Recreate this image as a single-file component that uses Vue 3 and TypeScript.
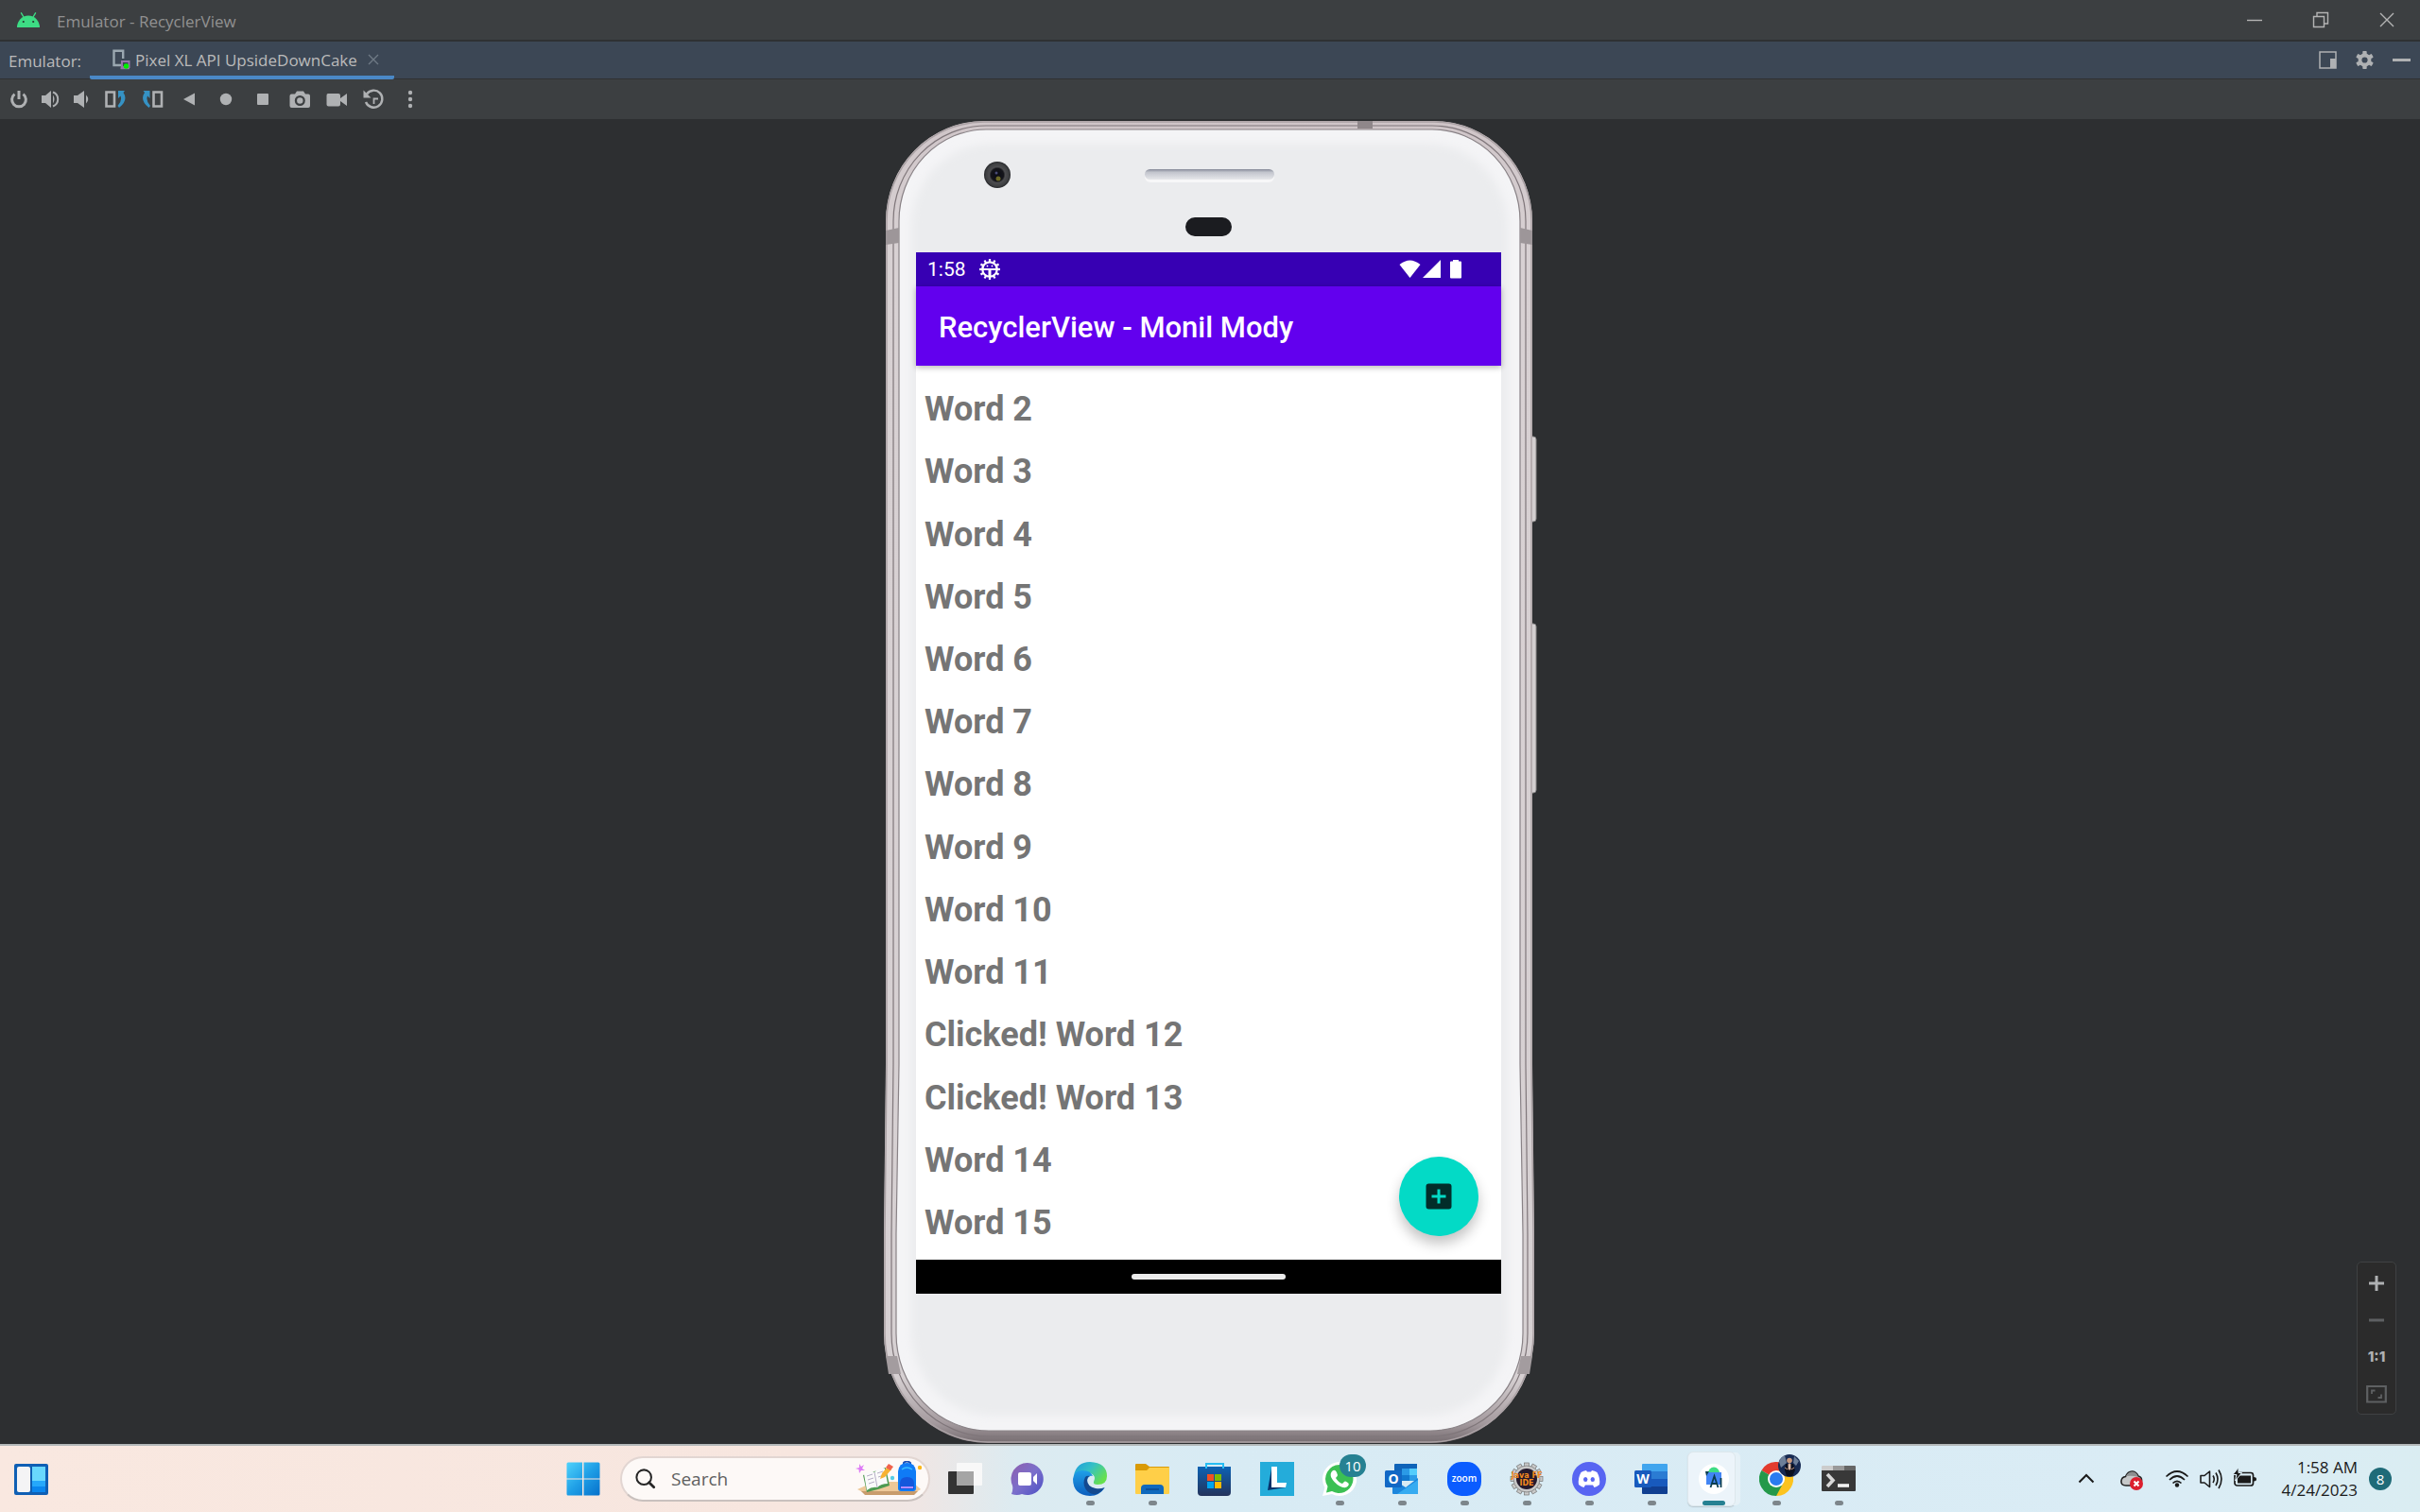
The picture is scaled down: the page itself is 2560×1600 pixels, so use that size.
<script setup lang="ts">
import { ref } from 'vue'

interface WordRow {
  id: number
  clicked: boolean
}

const rows = ref<WordRow[]>(
  Array.from({ length: 14 }, (_, i) => ({ id: i + 2, clicked: i + 2 === 12 || i + 2 === 13 })),
)

const teeth = Array.from({ length: 12 }, (_, i) => i * 30)
</script>

<template>
  <div class="desktop">
    <header class="titlebar">
      <svg class="droid" viewBox="0 0 24 16" aria-hidden="true">
        <path d="M4.500 0.800 L7 5 M19.500 0.800 L17 5" stroke="#3ddc84" stroke-width="1.400" stroke-linecap="round" />
        <path d="M0 16 A12 12.500 0 0 1 24 16 Z" fill="#3ddc84" />
        <circle cx="6.800" cy="10" r="1.100" fill="#26352c" />
        <circle cx="17.200" cy="10" r="1.100" fill="#26352c" />
      </svg>
      <span class="window-name">Emulator - RecyclerView</span>
      <div class="window-controls">
        <button type="button" aria-label="Minimize">
          <svg viewBox="0 0 18 18"><path d="M1 9.500H17" /></svg>
        </button>
        <button type="button" aria-label="Restore">
          <svg viewBox="0 0 18 18"><path d="M1.500 5.500H12.500V16.500H1.500Z M5 5V1.500H16.500V13H13" /></svg>
        </button>
        <button type="button" aria-label="Close">
          <svg viewBox="0 0 18 18"><path d="M2 2L16 16M16 2L2 16" /></svg>
        </button>
      </div>
    </header>

    <nav class="tabbar">
      <span class="tool-name">Emulator:</span>
      <div class="tab">
        <svg class="tab-icon" viewBox="0 0 19 22" aria-hidden="true">
          <path d="M1.500 2.500 V17 H9 M1.500 3 V1.800 H11.200 V10" fill="none" stroke="#9aa7b0" stroke-width="2.400" />
          <path d="M10 13 H17.500 V19 H10 Z M8.500 20.300 H18" fill="none" stroke="#9876aa" stroke-width="2" />
          <circle cx="14.500" cy="18" r="2.800" fill="#00f000" />
        </svg>
        <span>Pixel XL API UpsideDownCake</span>
        <button type="button" class="tab-close" aria-label="Close tab">
          <svg viewBox="0 0 12 12"><path d="M1 1L11 11M11 1L1 11" stroke="#6f7a85" stroke-width="1.400" /></svg>
        </button>
      </div>
      <div class="tab-actions">
        <button type="button" aria-label="View mode">
          <svg viewBox="0 0 19 19"><path d="M1 1H18V18H1Z" fill="none" stroke="#afb1b3" stroke-width="1.500" /><path d="M12 8H18V18H12Z" fill="#afb1b3" /></svg>
        </button>
        <button type="button" aria-label="Options">
          <svg viewBox="0 0 19 19">
            <g fill="#afb1b3">
              <rect v-for="a in [0, 60, 120, 180, 240, 300]" :key="a" x="7.300" y="0" width="4.400" height="5" rx="0.800" :transform="`rotate(${a} 9.500 9.500)`" />
            </g>
            <circle cx="9.500" cy="9.500" r="5" fill="none" stroke="#afb1b3" stroke-width="3.800" />
          </svg>
        </button>
        <button type="button" aria-label="Hide">
          <svg viewBox="0 0 19 19"><path d="M0 9.500H19" stroke="#afb1b3" stroke-width="3" /></svg>
        </button>
      </div>
    </nav>

    <div class="toolbar">
      <div class="tools narrow">
        <button type="button" aria-label="Power">
          <svg viewBox="0 0 25 25"><path d="M7.500 7.600 A7.400 7.400 0 1 0 16.500 7.600" fill="none" stroke="#afb1b3" stroke-width="3" /><path d="M12 4V13" stroke="#afb1b3" stroke-width="3" /></svg>
        </button>
        <button type="button" aria-label="Volume up">
          <svg viewBox="0 0 25 25"><path d="M3 9H7L13 4V22L7 17H3Z" fill="#afb1b3" /><path d="M15 8.500Q18 13 15 17.500Z" fill="#afb1b3" /><path d="M15 5.500A8 8 0 0 1 15 20.500" fill="none" stroke="#afb1b3" stroke-width="2" /></svg>
        </button>
        <button type="button" aria-label="Volume down">
          <svg viewBox="0 0 25 25"><path d="M4 9H8L15 4V22L8 17H4Z" fill="#afb1b3" /><path d="M17 8.500Q21.500 13 17 17.500Z" fill="#afb1b3" /></svg>
        </button>
      </div>
      <div class="tools">
        <button type="button" aria-label="Rotate left">
          <svg viewBox="0 0 25 25"><path d="M2.500 5.500H11V20.500H2.500Z" fill="none" stroke="#afb1b3" stroke-width="2.600" /><path d="M15 4H22L20.500 6Q26 14 16 22L14.500 20Q19.500 15 17.500 9.500L15 12Z" fill="#3592c4" /></svg>
        </button>
        <button type="button" aria-label="Rotate right">
          <svg viewBox="0 0 25 25"><path d="M13.500 5.500H22V20.500H13.500Z" fill="none" stroke="#afb1b3" stroke-width="2.600" /><path d="M9.500 4H2.500L4 6Q-1.500 14 8.500 22L10 20Q5 15 7 9.500L9.500 12Z" fill="#3592c4" /></svg>
        </button>
        <button type="button" aria-label="Back">
          <svg viewBox="0 0 25 25"><path d="M6 13L18 6.500V19.500Z" fill="#afb1b3" /></svg>
        </button>
        <button type="button" aria-label="Home">
          <svg viewBox="0 0 25 25"><circle cx="12" cy="13" r="6.200" fill="#afb1b3" /></svg>
        </button>
        <button type="button" aria-label="Overview">
          <svg viewBox="0 0 25 25"><rect x="6" y="7" width="12" height="12" rx="1" fill="#afb1b3" /></svg>
        </button>
        <button type="button" aria-label="Take screenshot">
          <svg viewBox="0 0 25 25"><path fill-rule="evenodd" d="M9 4.500H16L18 7.500H21Q23 7.500 23 9.500V20Q23 22 21 22H3.500Q1.500 22 1.500 20V9.500Q1.500 7.500 3.500 7.500H7Z M12.300 9A5.500 5.500 0 1 0 12.300 20A5.500 5.500 0 1 0 12.300 9Z" fill="#afb1b3" /><circle cx="12.300" cy="14.500" r="3.200" fill="#afb1b3" /></svg>
        </button>
        <button type="button" aria-label="Record screen">
          <svg viewBox="0 0 25 25"><path d="M3 7H14Q16 7 16 9V12L23 7V20L16 15V18.500Q16 20.500 14 20.500H3.500Q1.500 20.500 1.500 18.500V9Q1.500 7 3 7Z" fill="#afb1b3" /></svg>
        </button>
        <button type="button" aria-label="Snapshots">
          <svg viewBox="0 0 25 25"><path d="M5 7.500A9 9 0 1 1 4 16" fill="none" stroke="#afb1b3" stroke-width="2.400" /><path d="M1.500 3.500V11.500H9.500Z" fill="#afb1b3" /><path d="M12.500 18V12.500H17" fill="none" stroke="#afb1b3" stroke-width="1.800" /></svg>
        </button>
        <button type="button" aria-label="More">
          <svg viewBox="0 0 25 25"><g fill="#afb1b3"><circle cx="12" cy="6" r="2.200" /><circle cx="12" cy="13" r="2.200" /><circle cx="12" cy="20" r="2.200" /></g></svg>
        </button>
      </div>
    </div>

    <main class="stage">
      <div class="phone">
        <svg class="shell" viewBox="0 0 692 1402" aria-hidden="true">
          <defs>
            <linearGradient id="rim" x1="0" y1="0" x2="0" y2="1">
              <stop offset="0" stop-color="#cfc5c8" />
              <stop offset="0.100" stop-color="#d8d1d3" />
              <stop offset="0.950" stop-color="#d6d0d2" />
              <stop offset="0.985" stop-color="#a49a9e" />
              <stop offset="1" stop-color="#756c70" />
            </linearGradient>
            <linearGradient id="slot" x1="0" y1="0" x2="0" y2="1">
              <stop offset="0" stop-color="#868a98" />
              <stop offset="0.300" stop-color="#c2c5cd" />
              <stop offset="1" stop-color="#e6e7ea" />
            </linearGradient>
            <radialGradient id="lens">
              <stop offset="0" stop-color="#0b0c16" />
              <stop offset="0.480" stop-color="#15151a" />
              <stop offset="0.600" stop-color="#4d4d50" />
              <stop offset="0.850" stop-color="#3f4042" />
              <stop offset="1" stop-color="#26272a" />
            </radialGradient>
            <filter id="soften" x="-5%" y="-5%" width="110%" height="110%">
              <feGaussianBlur stdDeviation="5" />
            </filter>
          </defs>
          <g fill="#d3cfd0" stroke="#8c8a8b" stroke-width="1">
            <rect x="682" y="336" width="9" height="90" rx="3" />
            <rect x="682" y="534" width="9" height="179" rx="3" />
          </g>
          <path d="M107 2H583A104 106 0 0 1 687 108V1000L689 1180V1285A110 116 0 0 1 579 1401H111A110 116 0 0 1 1 1285V1180L3 1000V108A104 106 0 0 1 107 2Z" fill="url(#rim)" />
          <path d="M107 3H583A103 105 0 0 1 686 108V1000L688 1180V1285A109 115 0 0 1 579 1400H111A109 115 0 0 1 2 1285V1180L4 1000V108A103 105 0 0 1 107 3Z" fill="none" stroke="#aaa1a4" stroke-width="1.500" />
          <path d="M109 7H581A99 101 0 0 1 680 108V1000L682 1180V1285A103 109 0 0 1 579 1394H113A103 109 0 0 1 9 1285V1180L11 1000V108A98 101 0 0 1 109 7Z" fill="none" stroke="#7f767a" stroke-width="1.200" />
          <path d="M109 11H581A93 97 0 0 1 674 108V1000L677 1180V1285A98 103 0 0 1 579 1388H112A98 103 0 0 1 14 1285V1180L17 1000V108A92 97 0 0 1 109 11Z" fill="#f4f4f6" stroke="#898286" stroke-width="1.200" />
          <path d="M113 26H577A86 88 0 0 1 661 112V1280A86 90 0 0 1 577 1372H115A86 90 0 0 1 30 1282V112A86 88 0 0 1 113 26Z" fill="#ebecee" filter="url(#soften)" />
          <rect x="502" y="2" width="16" height="8" fill="#8f878a" />
          <path d="M3 118L17 115V131L3 133Z" fill="#9d9699" />
          <path d="M687 118L674 115V131L687 133Z" fill="#9d9699" />
          <path d="M3 1309H15L19 1328H6Z" fill="#a39c9f" />
          <path d="M687 1309H675L671 1328H684Z" fill="#a39c9f" />
          <circle cx="121" cy="59" r="14" fill="url(#lens)" />
          <circle cx="122" cy="63" r="2.500" fill="#6d6a26" />
          <circle cx="120" cy="57" r="1.500" fill="#4a4c78" />
          <rect x="277" y="54" width="137" height="13" rx="6" fill="#f7f7f8" />
          <rect x="277" y="53" width="137" height="11" rx="5.500" fill="url(#slot)" />
          <rect x="320" y="104" width="49" height="20" rx="10" fill="#1b1c20" />
        </svg>

        <div class="screen">
          <div class="statusbar">
            <span>1:58</span>
            <svg class="debug" viewBox="0 0 22 22" aria-hidden="true">
              <g fill="#fff">
                <rect v-for="a in teeth" :key="a" x="9.900" y="0" width="2.200" height="4" :transform="`rotate(${a} 11 11)`" />
              </g>
              <circle cx="11" cy="11" r="7.700" fill="none" stroke="#fff" stroke-width="2.200" />
              <path d="M4 11H18" stroke="#fff" stroke-width="2" />
              <path d="M11 11V19" stroke="#fff" stroke-width="3" />
              <circle cx="8.500" cy="7.500" r="0.900" fill="#fff" />
              <circle cx="13.500" cy="7.500" r="0.900" fill="#fff" />
            </svg>
            <svg class="signals" viewBox="0 0 68 20" aria-hidden="true">
              <path d="M0.500 5Q11.500 -4 22.500 5L11.500 19Z" fill="#fff" />
              <path d="M44 0V19H25Z" fill="#fff" />
              <path d="M57 1.500V0H63V1.500H65Q66 1.500 66 2.500V18.500Q66 19.500 65 19.500H55Q54 19.500 54 18.500V2.500Q54 1.500 55 1.500Z" fill="#fff" />
            </svg>
          </div>
          <h1 class="appbar">RecyclerView - Monil Mody</h1>
          <ul class="words">
            <li v-for="row in rows" :key="row.id">{{ row.clicked ? 'Clicked! ' : '' }}Word {{ row.id }}</li>
          </ul>
          <button type="button" class="fab" aria-label="Add word">
            <svg viewBox="0 0 28 28"><rect x="0.500" y="0.500" width="27" height="27" rx="3" fill="#022d2a" /><path d="M14 6.500V21.500M6.500 14H21.500" stroke="#03dac6" stroke-width="3" /></svg>
          </button>
          <div class="navbar"><span class="handle"></span></div>
        </div>
      </div>

      <div class="zoom-panel">
        <button type="button" aria-label="Zoom in"><svg viewBox="0 0 22 20"><path d="M11 2V18M3 10H19" stroke="#afb1b3" stroke-width="3" /></svg></button>
        <button type="button" aria-label="Zoom out"><svg viewBox="0 0 22 20"><path d="M3 10H19" stroke="#5e6062" stroke-width="3" /></svg></button>
        <button type="button" class="ratio">1:1</button>
        <button type="button" aria-label="Fit to screen"><svg viewBox="0 0 22 20"><path d="M1.200 2H20.800V18.500H1.200Z" fill="none" stroke="#5e6062" stroke-width="2.200" /><path d="M6 10V6.500H9.500M16 10.500V14H12.500" fill="none" stroke="#5e6062" stroke-width="1.800" /></svg></button>
      </div>
    </main>

    <footer class="taskbar">
      <button type="button" class="widgets" aria-label="Widgets">
        <svg viewBox="0 0 36 33">
          <rect width="36" height="33" rx="2" fill="#0f5fb4" />
          <rect x="3" y="3" width="14" height="27" rx="2" fill="#f4f4f5" />
          <path d="M19 3H33V18H19Z" fill="#69d8fd" />
          <path d="M19 18H33V24H19Z" fill="#25a8fb" />
          <path d="M19 24H33V30H19Z" fill="#0a86ee" />
        </svg>
      </button>

      <div class="center">
        <button type="button" class="app" aria-label="Start">
          <svg class="glyph" viewBox="0 0 36 36">
            <defs><linearGradient id="win" x1="0" y1="0" x2="1" y2="1"><stop offset="0" stop-color="#4fd2fb" /><stop offset="0.500" stop-color="#1f9fe6" /><stop offset="1" stop-color="#0670cb" /></linearGradient></defs>
            <path d="M0.500 2Q0.500 0.500 2 0.500H17V17.500H0.500ZM18.500 0.500H34Q35.500 0.500 35.500 2V17.500H18.500ZM0.500 18.500H17V35.500H2Q0.500 35.500 0.500 34ZM18.500 18.500H35.500V34Q35.500 35.500 34 35.500H18.500Z" fill="url(#win)" />
          </svg>
        </button>

        <label class="search">
          <svg class="lens" viewBox="0 0 24 24" aria-hidden="true"><circle cx="10" cy="10" r="8.500" fill="none" stroke="#262626" stroke-width="2.200" /><path d="M16 16L21.500 21.500" stroke="#262626" stroke-width="3" stroke-linecap="round" /></svg>
          <input type="search" placeholder="Search" aria-label="Search" />
          <svg class="school" viewBox="0 0 72 38" aria-hidden="true">
            <path d="M2 30L20 22H60L69 30L62 34H10Z" fill="#eec898" />
            <path d="M6 32L10 36H62L66 32Z" fill="#c89c6c" />
            <path d="M4 3L6 6L9 4L7 8L10 10L6 10L4 13L3.500 9L0 8L4 7Z" fill="#de7cf5" />
            <path d="M8 15L20 11L32 7L36 26L24 30L12 33Z" fill="#4d9a50" />
            <path d="M9 14Q16 9 20 12Q25 6 31 8L34 24Q27 24 23 28Q17 27 12 31Z" fill="#fafafa" />
            <path d="M20 12L23 28M12 16L18 14M13 20L19 18M14 24L20 22M23 13L29 11M24 17L30 15" stroke="#b6aec6" stroke-width="1" />
            <path d="M26 19L28 13L34 6L38 9L31 17Z" fill="#f7b232" />
            <path d="M32 7L35 3L40 6L37 10Z" fill="#f1624b" />
            <circle cx="39" cy="18" r="2.200" fill="#55cde6" />
            <circle cx="68" cy="7" r="2.200" fill="#fbb718" />
            <path d="M51 5V2Q54 -1 58 2V5" fill="none" stroke="#1c4fb3" stroke-width="2" />
            <path d="M45 11Q46 2 54.500 2Q63 2 64 11V29Q64 32 61 32H48Q45 32 45 29Z" fill="#0f7bf6" />
            <path d="M49 9Q54 5 60 9" fill="none" stroke="#37c0ff" stroke-width="1.500" />
            <path d="M47 30V24Q47 17 54.500 17Q62 17 62 24V30Z" fill="#1457dc" />
            <path d="M48 28H61" stroke="#b28cff" stroke-width="2" />
          </svg>
        </label>

        <div class="apps">
          <button type="button" class="app" aria-label="Task view">
            <svg class="glyph" viewBox="0 0 36 36"><rect x="0" y="10" width="27" height="24" rx="1" fill="#333" /><rect x="9" y="1" width="27" height="24" rx="1" fill="#f8f8f8" /><path d="M9 10H27V25H9Z" fill="#a5a5a5" /></svg>
          </button>
          <button type="button" class="app" aria-label="Chat">
            <svg class="glyph" viewBox="0 0 36 36">
              <defs><linearGradient id="chat" x1="0" y1="0" x2="1" y2="1"><stop offset="0" stop-color="#8f5fae" /><stop offset="0.500" stop-color="#7b6fcb" /><stop offset="1" stop-color="#4c4fc4" /></linearGradient></defs>
              <path d="M18 1A17 17 0 1 1 12 34Q7 36 1 34Q3 29 2 25A17 17 0 0 1 18 1Z" fill="url(#chat)" />
              <rect x="8" y="11" width="14" height="14" rx="2" fill="#fff" /><path d="M24 16L28 12V24L24 20Z" fill="#fff" />
            </svg>
          </button>
          <button type="button" class="app running" aria-label="Edge">
            <svg class="glyph" viewBox="0 0 36 36">
              <defs>
                <linearGradient id="edgeTop" x1="0" y1="0" x2="1" y2="0.600"><stop offset="0" stop-color="#1d9be0" /><stop offset="0.500" stop-color="#35c1c4" /><stop offset="1" stop-color="#66e04d" /></linearGradient>
                <linearGradient id="edgeLow" x1="0" y1="0" x2="0" y2="1"><stop offset="0" stop-color="#1fa0e8" /><stop offset="1" stop-color="#0c5dbd" /></linearGradient>
              </defs>
              <path d="M1 14Q4 0 18 0Q36 1 36 15Q36 24 26 24Q21 24 22 21Q25 15 19 12Q10 8 1 14Z" fill="url(#edgeTop)" />
              <path d="M0 18Q1 9 10 9Q19 9 21 15Q16 14 15 20Q15 30 27 30Q31 30 34 27Q28 36 18 36Q0 35 0 18Z" fill="url(#edgeLow)" />
              <path d="M13 16Q10 22 13 28Q17 35 25 34Q30 32 33.500 27Q29 29 24 28Q15 26 15 19Q15 16 18 15Q15 14 13 16Z" fill="#14498f" />
            </svg>
          </button>
          <button type="button" class="app running" aria-label="File Explorer">
            <svg class="glyph" viewBox="0 0 36 36"><path d="M0 3Q0 2 1 2H11L15 5H35Q36 5 36 6V12H0Z" fill="#d99a06" /><path d="M0 9H12L15 6H36V33Q36 34 35 34H1Q0 34 0 33Z" fill="#ffcf48" /><path d="M6 34V28Q6 24 10 24H26Q30 24 30 28V34Z" fill="#1069bd" /><path d="M11 29H25" stroke="#0a4a90" stroke-width="1.500" /></svg>
          </button>
          <button type="button" class="app" aria-label="Microsoft Store">
            <svg class="glyph" viewBox="0 0 36 36">
              <defs><linearGradient id="bag" x1="0" y1="0" x2="0" y2="1"><stop offset="0" stop-color="#0c62b4" /><stop offset="1" stop-color="#24345c" /></linearGradient></defs>
              <path d="M0 5H35V32Q35 36 31 36H4Q0 36 0 32Z" fill="url(#bag)" /><path d="M9 7V2H27V7" fill="none" stroke="#27bdf3" stroke-width="2" />
              <path d="M10 13H17V20H10Z" fill="#f25022" /><path d="M18 13H25V20H18Z" fill="#7fba00" /><path d="M10 21H17V28H10Z" fill="#00a4ef" /><path d="M18 21H25V28H18Z" fill="#ffb900" />
            </svg>
          </button>
          <button type="button" class="app" aria-label="Lenovo">
            <svg class="glyph" viewBox="0 0 36 36"><path d="M0 0H36V36H0Z" fill="#24acda" /><path d="M12 7L8 30L27 27L13 25Z" fill="#06306a" /><path d="M12 5H18V22H28L27 27H12Z" fill="#fff" /></svg>
          </button>
          <button type="button" class="app running" aria-label="WhatsApp">
            <svg class="glyph" viewBox="0 0 36 36"><path d="M18 0A18 18 0 1 1 10 34L0 36L2.500 27A18 18 0 0 1 18 0Z" fill="#fff" /><path d="M18 3A15 15 0 1 1 10 31L4 32.500L5.500 26A15 15 0 0 1 18 3Z" fill="#3bc054" /><path d="M10 10Q13 7 15 11L16 14Q16 15 14 17Q17 22 21 23L23 21Q24 20 26 21.500Q29 23 27 25.500Q24 29 18 25.500Q12 22 9 16Q8 12 10 10Z" fill="#fff" /></svg>
            <span class="count">10</span>
          </button>
          <button type="button" class="app running" aria-label="Outlook">
            <svg class="glyph" viewBox="0 0 36 36"><path d="M10 3Q10 2 11 2H34V18H10Z" fill="#0f63b8" /><path d="M18 7H26V14H18Z" fill="#2b9ae6" /><path d="M26 7H34V14H26Z" fill="#54cdfc" /><path d="M18 14H26V20H18Z" fill="#1279cf" /><path d="M26 14H34V20H26Z" fill="#2c9de8" /><path d="M8 18L22 27L35 17V33Q35 34 34 34H9Q8 34 8 33Z" fill="#1c86dc" /><path d="M35 19L13 34H34Q35 34 35 33Z" fill="#36abf1" /><rect y="9" width="18" height="18" rx="1.500" fill="#1268c5" /><text x="9" y="23" text-anchor="middle" class="letter">O</text></svg>
          </button>
          <button type="button" class="app running" aria-label="Zoom">
            <svg class="glyph" viewBox="0 0 36 36"><rect width="36" height="36" rx="15" fill="#0b5cff" /><text x="18" y="21" text-anchor="middle" class="zoom-word">zoom</text></svg>
          </button>
          <button type="button" class="app running" aria-label="Java FF IDE">
            <svg class="glyph" viewBox="0 0 36 36"><g fill="#c9c9c9" stroke="#666" stroke-width="0.600"><rect v-for="a in teeth" :key="a" x="15.500" y="1" width="5" height="6" :transform="`rotate(${a} 18 18)`" /><circle cx="18" cy="18" r="14" /></g><circle cx="18" cy="18" r="11" fill="#251a2c" /><text x="18" y="17" text-anchor="middle" class="java">Java FF</text><text x="18" y="25" text-anchor="middle" class="java">IDE</text></svg>
          </button>
          <button type="button" class="app running" aria-label="Discord">
            <svg class="glyph" viewBox="0 0 36 36"><circle cx="18" cy="18" r="18" fill="#5865f2" /><path d="M9.500 11Q12 9.500 15 9L16 10.500H20L21 9Q24 9.500 26.500 11Q30 17 29 24Q26 26.500 23.500 27L22 24.500H14L12.500 27Q10 26.500 7 24Q6 17 9.500 11Z" fill="#fff" /><ellipse cx="14.200" cy="18.500" rx="2.200" ry="2.500" fill="#5865f2" /><ellipse cx="21.800" cy="18.500" rx="2.200" ry="2.500" fill="#5865f2" /></svg>
          </button>
          <button type="button" class="app running" aria-label="Word">
            <svg class="glyph" viewBox="0 0 36 36"><path d="M8 3Q8 2 9 2H34Q35 2 35 3V10H8Z" fill="#41a5ee" /><path d="M8 10H35V18H8Z" fill="#2b7cd3" /><path d="M8 18H35V26H8Z" fill="#185abd" /><path d="M8 26H35V33Q35 34 34 34H9Q8 34 8 33Z" fill="#103f91" /><rect y="9" width="18" height="18" rx="1.500" fill="#185abd" /><text x="9" y="23" text-anchor="middle" class="letter">W</text></svg>
          </button>
          <button type="button" class="app active" aria-label="Android Studio">
            <svg class="glyph" viewBox="0 0 36 36"><circle cx="18" cy="18" r="16" fill="#fff" /><path d="M12 12A6 6.500 0 0 1 24 12Z" fill="#3ddc84" /><path d="M10 11H26V24H10Z" fill="#4285f4" /><path d="M9 10L13 10L10 15Z" fill="#0b3d4f" /><path d="M14.500 27L18.500 15L22.500 27M16 23H21M25.500 17V27" fill="none" stroke="#0b3d4f" stroke-width="1.800" /></svg>
          </button>
          <button type="button" class="app running" aria-label="Chrome">
            <svg class="glyph" viewBox="0 0 36 36"><path d="M18 18L2.400 9A18 18 0 0 1 33.600 9Z" fill="#e33b2e" /><path d="M18 18L33.600 9A18 18 0 0 1 18 36Z" fill="#fcc31e" /><path d="M18 18V24L18 36A18 18 0 0 1 2.400 9Z" fill="#24994a" /><path d="M18 9.500H33.800L25.500 22Z" fill="#fcc31e" /><path d="M25.500 22L18 36L15 26Z" fill="#24994a" /><circle cx="18" cy="18" r="9" fill="#fff" /><circle cx="18" cy="18" r="7" fill="#2a7cf0" /></svg>
            <svg class="avatar" viewBox="0 0 24 24"><circle cx="12" cy="12" r="12" fill="#172a52" /><path d="M1 8A12 12 0 0 1 7 1L9 9L3 14ZM17 2L22 7L19 12L16 9Z" fill="#6d7f99" /><circle cx="12" cy="6.500" r="2.800" fill="#c89a80" /><path d="M8 10L16 10L18 17L15 23H9L7 17Z" fill="#0b1020" /><path d="M11 10H13V16H11ZM7 14L10 16M17 14L14 16" fill="#e8e8ee" stroke="#c89a80" stroke-width="1" /></svg>
          </button>
          <button type="button" class="app running" aria-label="Terminal">
            <svg class="glyph" viewBox="0 0 36 36"><path d="M0 9H36V30Q36 31 35 31H1Q0 31 0 30Z" fill="#383838" /><path d="M0 9V5Q0 4 1 4H12V9Z" fill="#ccc" /><path d="M12 4H24V9H12Z" fill="#999" /><path d="M24 4H35Q36 4 36 5V9H24Z" fill="#666" /><path d="M6 13L12 19.500L6 26" fill="none" stroke="#d8d8d8" stroke-width="3.600" /><path d="M17 25H29" stroke="#f2f2f2" stroke-width="3.600" /></svg>
          </button>
        </div>
      </div>

      <div class="tray">
        <button type="button" aria-label="Show hidden icons"><svg viewBox="0 0 24 24"><path d="M4.500 15.500L12 8L19.500 15.500" fill="none" stroke="#1a1a1a" stroke-width="2" /></svg></button>
        <button type="button" class="cloud" aria-label="OneDrive"><svg viewBox="0 0 24 24"><path d="M6 19Q0.500 19 1 14Q1.500 10 5.500 9.500Q8 3.500 13 4Q17 4.500 19 9Q23 10 22.500 14Q22 18 18 19Z" fill="#c6c8c9" stroke="#222" stroke-width="1.600" /><path d="M6 9Q13 8 19 10Q17 4.500 13 4.500Q8 4.500 6 9Z" fill="#8d8f90" /><circle cx="17" cy="17" r="7" fill="#dc1f2e" /><path d="M14.500 14.500L19.500 19.500M19.500 14.500L14.500 19.500" stroke="#fff" stroke-width="2" /></svg></button>
        <button type="button" class="quick" aria-label="Network, volume and battery">
          <svg viewBox="0 0 24 24"><g fill="none" stroke="#1a1a1a" stroke-width="1.700"><path d="M0.500 9.500Q12 -1.500 23.500 9.500M4 13Q12 5 20 13M7.500 16.500Q12 12 16.500 16.500" /></g><circle cx="12" cy="18.500" r="2.200" fill="#1a1a1a" /></svg>
          <svg viewBox="0 0 24 24"><g fill="none" stroke="#1a1a1a" stroke-width="1.600"><path d="M1 8.500H5L10.500 4V20.500L5 16H1Z" stroke-linejoin="round" /><path d="M14 8.500Q16.500 12.200 14 16M17 5.500Q21 12.200 17 19M20 2.500Q26 12.200 20 22" /></g></svg>
          <svg viewBox="0 0 24 24"><rect x="1" y="5.500" width="19.500" height="13.500" rx="2.500" fill="none" stroke="#1a1a1a" stroke-width="1.700" /><path d="M4 8.500H18V16.500H4Z" fill="#1a1a1a" /><path d="M21 10Q24 10 24 12.300Q24 14.500 21 14.500Z" fill="#1a1a1a" /><path d="M5 0L-1 7.500H3L1.500 14L8.500 5.500H5Z" fill="#1a1a1a" stroke="#d9ebf4" stroke-width="1" /></svg>
        </button>
        <button type="button" class="clock"><time>1:58 AM</time><time>4/24/2023</time></button>
        <span class="alerts">8</span>
      </div>
    </footer>
  </div>
</template>

<style>
body {
  margin: 0;
  background: #2d2f31;
}
</style>

<style scoped>
.desktop {
  min-height: 100vh;
  display: flex;
  flex-direction: column;
  background: #2d2f31;
  font-family: "Open Sans", "Noto Sans", sans-serif;
  font-size: 17px;
  color: #bbbbbb;
}

button {
  padding: 0;
  border: 0;
  background: none;
  color: inherit;
  font: inherit;
  display: flex;
  align-items: center;
  justify-content: center;
}

svg {
  display: block;
  flex: none;
}

.titlebar {
  box-sizing: border-box;
  height: 44px;
  border-bottom: 2px solid #2f3133;
  background: #3c3f41;
  display: flex;
  align-items: center;
  padding-left: 18px;
  color: #919191;
}

.droid {
  width: 24px;
  height: 16px;
}

.window-name {
  margin-left: 18px;
  padding-top: 2px;
}

.window-controls {
  margin-left: auto;
  display: flex;
}

.window-controls button {
  width: 70px;
  height: 42px;
}

.window-controls svg {
  width: 18px;
  height: 18px;
  fill: none;
  stroke: #b4b4b4;
  stroke-width: 1.4px;
}

.tabbar {
  box-sizing: border-box;
  height: 40px;
  border-bottom: 1px solid #2f3133;
  background: #3c4755;
  display: flex;
  padding-left: 9px;
}

.tool-name {
  width: 86px;
  line-height: 42px;
}

.tab {
  box-sizing: border-box;
  height: 40px;
  border-bottom: 4px solid #4a88c7;
  border-radius: 2px;
  padding: 2px 16px 0 24px;
  display: flex;
  align-items: center;
}

.tab-icon {
  width: 19px;
  height: 22px;
  margin-right: 5px;
}

.tab-close {
  margin-left: 11px;
}

.tab-close svg {
  width: 12px;
  height: 12px;
}

.tab-actions {
  margin-left: auto;
  display: flex;
}

.tab-actions button {
  width: 39px;
}

.tab-actions svg {
  width: 19px;
  height: 19px;
}

.toolbar {
  height: 42px;
  background: #3c3f41;
  display: flex;
  padding-left: 4px;
}

.tools {
  display: flex;
}

.tools button {
  width: 39px;
  height: 41px;
}

.tools.narrow button {
  width: 33px;
}

.tools svg {
  width: 25px;
  height: 25px;
}

.stage {
  flex: 1;
  position: relative;
  display: flex;
  justify-content: center;
}

.phone {
  display: grid;
}

.shell {
  grid-area: 1 / 1;
  width: 692px;
  height: 1402px;
}

.screen {
  grid-area: 1 / 1;
  position: relative;
  width: 619px;
  height: 1102px;
  margin: 141px 0 0 35px;
  background: #ffffff;
  font-family: Roboto, sans-serif;
  display: flex;
  flex-direction: column;
}

.statusbar {
  height: 36px;
  background: #3700b3;
  color: #ffffff;
  font-size: 21px;
  display: flex;
  align-items: center;
  padding: 0 40px 0 12px;
}

.debug {
  width: 22px;
  height: 22px;
  margin-left: 14px;
}

.signals {
  width: 68px;
  height: 20px;
  margin-left: auto;
}

.appbar {
  margin: 0;
  height: 84px;
  padding-left: 24px;
  background: #6200ee;
  box-shadow: 0 2px 6px rgba(0, 0, 0, 0.28);
  color: #ffffff;
  font-size: 31px;
  font-weight: 500;
  line-height: 88px;
}

.words {
  flex: 1;
  margin: 0;
  padding: 13px 9px 6px;
  list-style: none;
  display: flex;
  flex-direction: column;
  color: #757575;
  font-size: 36px;
  font-weight: 700;
}

.words li {
  flex: 1;
  display: flex;
  align-items: center;
  white-space: pre;
}

.fab {
  position: absolute;
  right: 24px;
  bottom: 61px;
  width: 84px;
  height: 84px;
  border-radius: 50%;
  background: #03dac6;
  box-shadow: 0 8px 14px rgba(0, 0, 0, 0.24);
}

.fab svg {
  width: 28px;
  height: 28px;
}

.navbar {
  height: 36px;
  background: #000000;
  display: flex;
  align-items: center;
  justify-content: center;
}

.handle {
  width: 163px;
  height: 6px;
  border-radius: 3px;
  background: #ebebeb;
}

.zoom-panel {
  position: absolute;
  right: 25px;
  bottom: 31px;
  width: 40px;
  padding: 2px 0;
  border: 1px solid #3f4143;
  border-radius: 5px;
  background: #2b2b2b;
}

.zoom-panel button {
  width: 40px;
  height: 39px;
}

.zoom-panel svg {
  width: 22px;
  height: 20px;
}

.zoom-panel .ratio {
  color: #afb1b3;
  font-family: Inter, sans-serif;
  font-size: 15px;
  font-weight: 800;
}

.taskbar {
  box-sizing: border-box;
  height: 72px;
  border-top: 2px solid #b4b9ba;
  background: linear-gradient(90deg, #f9e8e0 0%, #f7e6df 33%, #efe6e4 38%, #dcebf1 42%, #d8ebf4 50%, #daecf5 90%, #daedf2 100%);
  display: grid;
  grid-template-columns: 1fr auto 1fr;
  align-items: center;
}

.widgets {
  margin-left: 15px;
  justify-self: start;
}

.widgets svg {
  width: 36px;
  height: 33px;
}

.center {
  display: flex;
  align-items: center;
  gap: 6px;
  padding-left: 2px;
}

.apps {
  display: flex;
  margin-left: -2px;
}

.app {
  position: relative;
  width: 66px;
  height: 70px;
}

.glyph {
  width: 36px;
  height: 36px;
}

.running::after,
.active::after {
  content: "";
  position: absolute;
  left: 50%;
  bottom: 7px;
  width: 9px;
  height: 5px;
  margin-left: -4px;
  border-radius: 3px;
  background: #7d868b;
}

.active::after {
  width: 24px;
  margin-left: -12px;
  background: #268192;
}

.active::before {
  content: "";
  position: absolute;
  left: 5px;
  top: 6px;
  width: 49px;
  height: 56px;
  border: 1px solid #dde7ec;
  border-radius: 6px;
  background: #ecf4fa;
  box-shadow: 6px 0 0 -1px #e6f1f7, 0 1px 1px #b9c8d0;
}

.active .glyph {
  position: relative;
}

.count {
  position: absolute;
  left: 33px;
  top: 9px;
  width: 28px;
  border-radius: 12px;
  background: #268192;
  color: #ffffff;
  font-size: 15px;
  line-height: 24px;
}

.avatar {
  position: absolute;
  left: 35px;
  top: 9px;
  width: 24px;
  height: 24px;
}

.letter {
  fill: #ffffff;
  font-size: 14px;
  font-weight: 700;
}

.zoom-word {
  fill: #ffffff;
  font-size: 10px;
  font-weight: 600;
}

.java {
  fill: #f58b1e;
  font-family: "DejaVu Sans", sans-serif;
  font-size: 8px;
  font-weight: 700;
}

.search {
  box-sizing: border-box;
  width: 328px;
  height: 48px;
  padding: 0 5px 0 14px;
  border: 2px solid #e2d6d2;
  border-bottom-color: #c9c1be;
  border-radius: 24px;
  background: #fdf9f7;
  display: flex;
  align-items: center;
}

.lens {
  width: 22px;
  height: 22px;
}

.search input {
  flex: 1;
  min-width: 0;
  margin-left: 16px;
  padding: 0;
  border: 0;
  background: none;
  color: #606060;
  font: 19px "Open Sans", sans-serif;
}

.search input::placeholder {
  color: #606060;
}

.school {
  width: 72px;
  height: 38px;
}

.tray {
  justify-self: end;
  display: flex;
  align-items: center;
  padding-right: 30px;
  color: #1a1a1a;
}

.tray svg {
  width: 24px;
  height: 24px;
}

.cloud {
  margin: 0 24px;
}

.quick {
  gap: 12px;
}

.quick svg {
  overflow: visible;
}

.clock {
  width: 107px;
  flex-direction: column;
  align-items: flex-end;
  line-height: 24px;
}

.alerts {
  width: 24px;
  height: 24px;
  margin-left: 12px;
  border-radius: 50%;
  background: #1f6b78;
  color: #ffffff;
  font-size: 15px;
  line-height: 24px;
  text-align: center;
}
</style>
